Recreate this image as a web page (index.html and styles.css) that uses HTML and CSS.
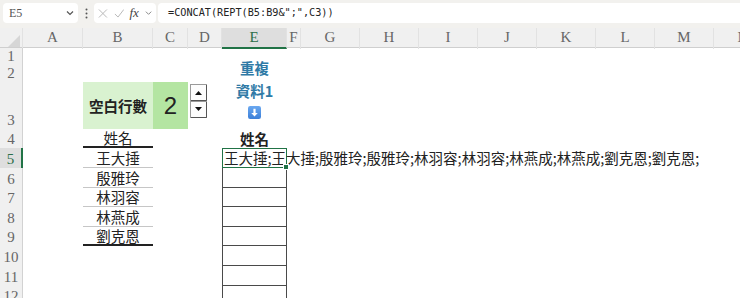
FILE: index.html
```html
<!DOCTYPE html>
<html lang="zh-Hant">
<head>
    <meta charset="UTF-8">
    <title>空白行數</title>
    <link rel="stylesheet" href="styles.css">
</head>
<body>
    <!-- formula bar -->
    <div class="formula-bar">
        <div class="name-box">
            <span>E5</span>
            <svg width="8" height="6" viewBox="0 0 8 6"><path d="M1 1.5 L4 4.5 L7 1.5" fill="none" stroke="#555" stroke-width="1.2"/></svg>
        </div>
        <div class="grip">
            <svg width="3" height="11" viewBox="0 0 3 11"><circle cx="1.5" cy="1.5" r="1" fill="#555"/><circle cx="1.5" cy="5.5" r="1" fill="#555"/><circle cx="1.5" cy="9.5" r="1" fill="#555"/></svg>
        </div>
        <div class="fx-box">
            <svg width="11" height="11" viewBox="0 0 11 11"><path d="M1 1 L10 10 M10 1 L1 10" stroke="#b8b8b8" stroke-width="1.1" fill="none"/></svg>
            <svg width="12" height="11" viewBox="0 0 12 11"><path d="M1 6 L4.5 9.5 L11 1" stroke="#b8b8b8" stroke-width="1.1" fill="none"/></svg>
            <span class="fx">fx</span>
            <svg width="8" height="6" viewBox="0 0 8 6"><path d="M1 1.5 L4 4.5 L7 1.5" fill="none" stroke="#888" stroke-width="1.1"/></svg>
        </div>
        <div class="formula">=CONCAT(REPT(B5:B9&amp;";",C3))</div>
    </div>

    <!-- column headers -->
    <div class="col-heads">
        <div class="corner">
            <svg width="12" height="12" viewBox="0 0 12 12"><path d="M12 0 L12 12 L0 12 Z" fill="#d6d6d6"/></svg>
        </div>
        <div>A</div>
        <div>B</div>
        <div>C</div>
        <div>D</div>
        <div class="active">E</div>
        <div>F</div>
        <div>G</div>
        <div>H</div>
        <div>I</div>
        <div>J</div>
        <div>K</div>
        <div>L</div>
        <div>M</div>
        <div>N</div>
    </div>

    <!-- cells -->
    <div class="sheet">
        <div class="rh">1</div><div></div><div></div><div></div><div></div>
        <div class="merged">
            <span>重複</span>
            <span>資料1</span>
            <svg class="down" width="13" height="13" viewBox="0 0 12 12">
                <defs>
                    <linearGradient id="blue" x1="0" y1="0" x2="0" y2="1">
                        <stop offset="0" stop-color="#6aa8f0"/>
                        <stop offset="1" stop-color="#3b7fd8"/>
                    </linearGradient>
                </defs>
                <rect x="0" y="0" width="12" height="12" rx="2" fill="url(#blue)"/>
                <path d="M5 2.5 H7 V6.5 H9 L6 9.8 L3 6.5 H5 Z" fill="#fff"/>
            </svg>
        </div>

        <div class="rh">2</div><div></div><div></div><div></div><div></div>

        <div class="rh">3</div><div></div>
        <div class="label">空白行數</div>
        <div class="count">2</div>
        <div class="spin-cell">
            <svg width="18" height="35" viewBox="0 0 18 35">
                <rect x="0.5" y="0.5" width="16" height="16" fill="#fdfdfd" stroke="#9a9a9a"/>
                <path d="M16.5 1 V16.5 H1" stroke="#555" fill="none"/>
                <path d="M5 11 H12 L8.5 7 Z" fill="#111"/>
                <rect x="0.5" y="17.5" width="16" height="16" fill="#fdfdfd" stroke="#9a9a9a"/>
                <path d="M16.5 18 V33.5 H1" stroke="#555" fill="none"/>
                <path d="M5 23 H12 L8.5 27 Z" fill="#111"/>
            </svg>
        </div>

        <div class="rh">4</div><div></div>
        <div class="name-head">姓名</div><div></div><div></div>
        <div class="e-head">姓名</div>

        <div class="rh active">5</div><div></div>
        <div class="name">王大捶</div><div></div><div></div>
        <div class="selected">王大捶;王大捶;殷雅玲;殷雅玲;林羽容;林羽容;林燕成;林燕成;劉克恩;劉克恩;</div>

        <div class="rh">6</div><div></div>
        <div class="name">殷雅玲</div><div></div><div></div>
        <div class="box"></div>

        <div class="rh">7</div><div></div>
        <div class="name">林羽容</div><div></div><div></div>
        <div class="box"></div>

        <div class="rh">8</div><div></div>
        <div class="name">林燕成</div><div></div><div></div>
        <div class="box"></div>

        <div class="rh">9</div><div></div>
        <div class="name last">劉克恩</div><div></div><div></div>
        <div class="box"></div>

        <div class="rh">10</div><div></div><div></div><div></div><div></div>
        <div class="box"></div>

        <div class="rh">11</div><div></div><div></div><div></div><div></div>
        <div class="box"></div>

        <div class="rh">12</div><div></div><div></div><div></div><div></div>
        <div class="box"></div>
    </div>
</body>
</html>
```

FILE: styles.css
```css
body {
    margin: 0;
    width: 740px;
    height: 298px;
    overflow: hidden;
    background-color: #fff;
    font-family: "Noto Sans CJK TC", "Noto Sans", sans-serif;
    color: #222;
}

/* formula bar */
.formula-bar {
    display: flex;
    align-items: flex-start;
    height: 28px;
    padding: 3px 0 0 3px;
    box-sizing: border-box;
    background-color: #f2f1ee;
}
.name-box {
    display: flex;
    align-items: center;
    justify-content: space-between;
    width: 75px;
    height: 20px;
    padding: 0 4px 0 6px;
    box-sizing: border-box;
    background-color: #fff;
    border-radius: 4px;
    font: 12px "Liberation Serif", serif;
    color: #555;
}
.grip {
    display: flex;
    justify-content: center;
    align-items: center;
    width: 16px;
    height: 20px;
}
.fx-box {
    display: flex;
    align-items: center;
    gap: 6px;
    width: 62px;
    height: 20px;
    padding: 0 4px;
    box-sizing: border-box;
    background-color: #fff;
    border-radius: 4px;
}
.fx {
    font: italic 13px "Liberation Serif", serif;
    color: #444;
    margin-left: -1px;
}
.formula {
    flex: 1;
    height: 20px;
    margin-left: 2px;
    padding-left: 10px;
    background-color: #fff;
    border-radius: 4px 0 0 4px;
    font: 10.2px "DejaVu Sans Mono", monospace;
    line-height: 20px;
    color: #222;
}

/* column headers */
.col-heads {
    display: grid;
    grid-template-columns: 23px 60px 70px 35px 34px 65px 14px repeat(8, 59px);
    height: 20px;
    box-sizing: border-box;
    background-color: #f0f0f0;
    border-bottom: 1px solid #cfcfcf;
}
.col-heads div {
    border-right: 1px solid #e2e2e2;
    text-align: center;
    font: 15px "Liberation Serif", serif;
    line-height: 19px;
    color: #666;
}
.col-heads .corner {
    display: flex;
    align-items: flex-end;
    justify-content: flex-end;
    padding: 0 2px 2px 0;
}
.col-heads .active {
    background-color: #dedede;
    border-bottom: 2px solid #217346;
    color: #2c6e49;
}

/* sheet */
.sheet {
    display: grid;
    grid-template-columns: 23px 60px 70px 35px 34px 65px;
    grid-template-rows: 17px 17px 47px 19px 20px repeat(7, 19.6px);
    font-size: 14.5px;
}
.rh {
    display: flex;
    align-items: flex-end;
    justify-content: center;
    background-color: #f0f0f0;
    border-right: 1px solid #d2d2d2;
    font: 15px "Liberation Serif", serif;
    line-height: 17px;
    color: #666;
}
.rh.active {
    background-color: #dedede;
    border-right: 2px solid #217346;
    color: #2c6e49;
}
.merged {
    grid-row: span 3;
    display: flex;
    flex-direction: column;
    align-items: center;
    justify-content: center;
    padding-bottom: 3px;
    font-weight: bold;
    line-height: 23px;
    color: #2f7aa6;
}
.merged .down {
    margin-top: 4px;
}
.label {
    display: flex;
    align-items: center;
    justify-content: center;
    background-color: #d9f2d0;
    font-weight: bold;
}
.count {
    display: flex;
    align-items: center;
    justify-content: center;
    background-color: #b4e5a2;
    font: 24px "Liberation Sans", sans-serif;
}
.spin-cell {
    padding: 2px 0 0 2px;
}
.name-head,
.name,
.e-head {
    display: flex;
    align-items: center;
    justify-content: center;
}
.name-head {
    border-bottom: 2px solid #222;
}
.name {
    border-bottom: 1px solid #c6c6c6;
}
.name.last {
    border-bottom: 2px solid #222;
}
.e-head {
    font-weight: bold;
}
.selected {
    position: relative;
    border: 1px solid #217346;
    padding-left: 1px;
    line-height: 18px;
    white-space: nowrap;
}
.selected::after {
    content: "";
    position: absolute;
    right: -3px;
    bottom: -3px;
    width: 4px;
    height: 4px;
    background-color: #217346;
    border: 1px solid #fff;
}
.box {
    border: 1px solid #4a4a4a;
    border-top: none;
}
```
